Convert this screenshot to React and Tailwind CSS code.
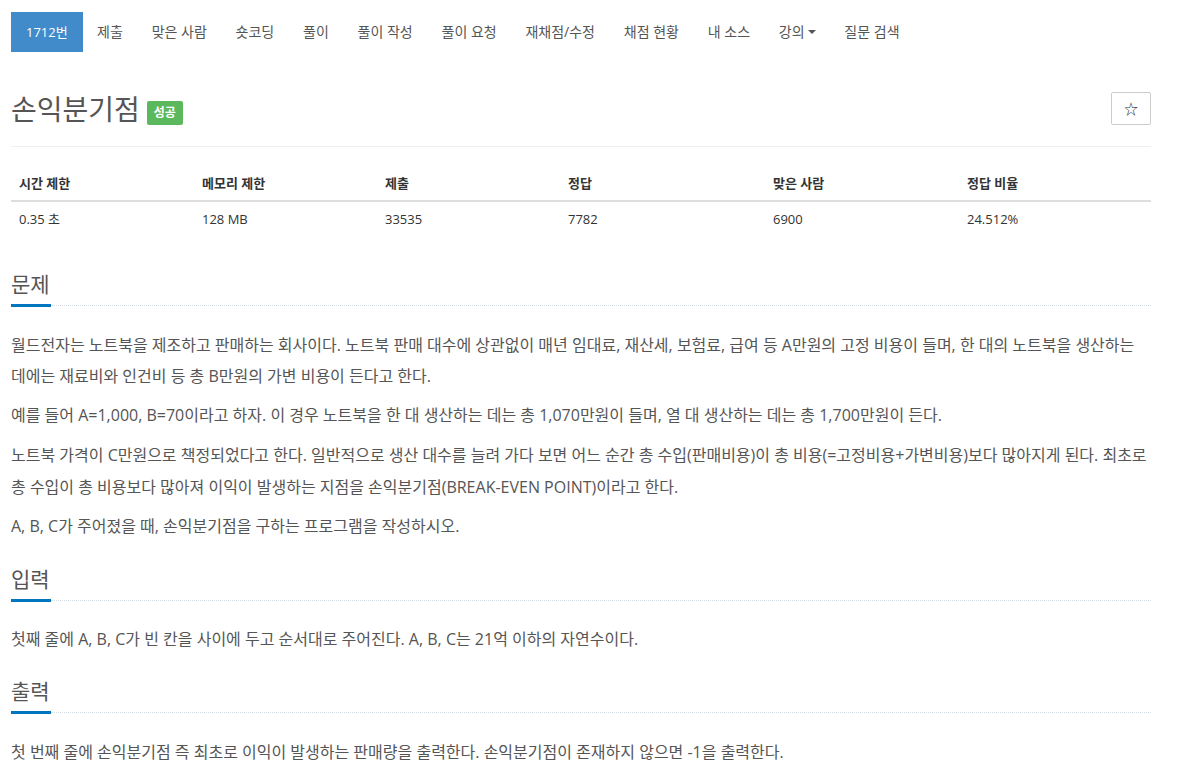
import React from "react";

const font = { fontFamily: '"Open Sans", "Noto Sans CJK KR", sans-serif' };

const tabs = ["제출", "맞은 사람", "숏코딩", "풀이", "풀이 작성", "풀이 요청", "재채점/수정", "채점 현황", "내 소스"];

const stats = [
  ["시간 제한", "0.35 초"],
  ["메모리 제한", "128 MB"],
  ["제출", "33535"],
  ["정답", "7782"],
  ["맞은 사람", "6900"],
  ["정답 비율", "24.512%"],
];

function Heading({ children }) {
  return (
    <div>
      <h2 className="text-[21px] leading-[30px] text-[#555]">{children}</h2>
      <div className="mt-[5px] flex items-center">
        <div className="w-10 h-[3px] bg-[#0076c0]" />
        <div className="flex-1 border-t border-dotted border-[#d5dce5]" />
      </div>
    </div>
  );
}

export default function App() {
  return (
    <div style={font} className="bg-white min-h-[775px] pt-3 text-[#555]">
      <div className="w-[1140px] ml-[11px]">
        <ul className="flex text-[14px] leading-[40px]">
          <li className="px-[15px] bg-[#428bca] text-white text-[13px]">1712번</li>
          {tabs.map((t) => (
            <li key={t} className="px-[14.4px] text-[#555]">{t}</li>
          ))}
          <li className="px-[14.4px] flex items-center gap-[3px]">
            강의
            <span className="inline-block w-0 h-0 border-x-4 border-x-transparent border-t-4 border-t-[#555]" />
          </li>
          <li className="px-[14.4px]">질문 검색</li>
        </ul>

        <div className="mt-10 flex items-center justify-between pb-[21px] border-b border-[#eee]">
          <div className="flex items-center gap-[7px]">
            <h1 className="text-[28px] leading-[32px] text-[#555]">손익분기점</h1>
            <span className="mt-2 h-6 px-[7px] rounded-[2px] bg-[#5cb85c] text-white text-[12px] font-bold leading-6">성공</span>
          </div>
          <button className="w-10 h-[33px] border border-[#ccc] rounded-[2px] text-[#333] text-[14px] flex items-center justify-center">
            ☆
          </button>
        </div>

        <div className="mt-[19px] text-[13px] text-[#333]">
          <div className="grid grid-cols-[183px_183px_183px_205px_194px_1fr] border-b-2 border-[#ddd]">
            {stats.map(([h]) => (
              <div key={h} className="px-2 py-2 leading-[18px] font-bold">{h}</div>
            ))}
          </div>
          <div className="grid grid-cols-[183px_183px_183px_205px_194px_1fr]">
            {stats.map(([h, v]) => (
              <div key={h} className="px-2 py-2 leading-[18px]">{v}</div>
            ))}
          </div>
        </div>

        <div className="mt-[33px]">
          <Heading>문제</Heading>
          <div className="mt-[23px] text-[16px] leading-[31px] text-[#555] space-y-[8px]">
            <p>월드전자는 노트북을 제조하고 판매하는 회사이다. 노트북 판매 대수에 상관없이 매년 임대료, 재산세, 보험료, 급여 등 A만원의 고정 비용이 들며, 한 대의 노트북을 생산하는 데에는 재료비와 인건비 등 총 B만원의 가변 비용이 든다고 한다.</p>
            <p>예를 들어 A=1,000, B=70이라고 하자. 이 경우 노트북을 한 대 생산하는 데는 총 1,070만원이 들며, 열 대 생산하는 데는 총 1,700만원이 든다.</p>
            <p className="leading-[32px]">노트북 가격이 C만원으로 책정되었다고 한다. 일반적으로 생산 대수를 늘려 가다 보면 어느 순간 총 수입(판매비용)이 총 비용(=고정비용+가변비용)보다 많아지게 된다. 최초로 총 수입이 총 비용보다 많아져 이익이 발생하는 지점을 손익분기점(BREAK-EVEN POINT)이라고 한다.</p>
            <p>A, B, C가 주어졌을 때, 손익분기점을 구하는 프로그램을 작성하시오.</p>
          </div>
        </div>

        <div className="mt-[22px]">
          <Heading>입력</Heading>
          <p className="mt-[22px] text-[16px] leading-[31px]">첫째 줄에 A, B, C가 빈 칸을 사이에 두고 순서대로 주어진다. A, B, C는 21억 이하의 자연수이다.</p>
        </div>

        <div className="mt-[21px]">
          <Heading>출력</Heading>
          <p className="mt-[23px] text-[16px] leading-[31px]">첫 번째 줄에 손익분기점 즉 최초로 이익이 발생하는 판매량을 출력한다. 손익분기점이 존재하지 않으면 -1을 출력한다.</p>
        </div>
      </div>
    </div>
  );
}
